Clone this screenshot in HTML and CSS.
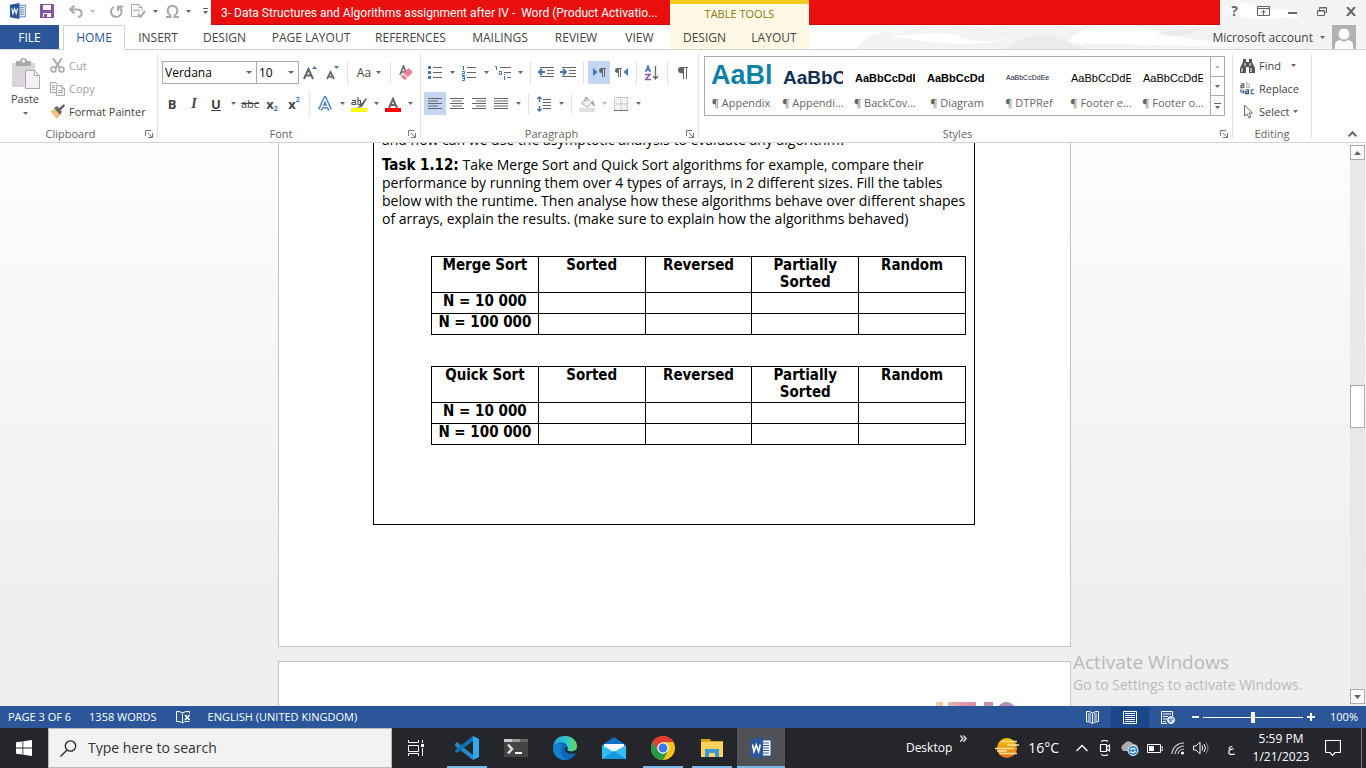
FILE: index.html
```html
<!DOCTYPE html>
<html lang="en">
<head>
    <meta charset="UTF-8">
    <meta name="viewport" content="width=device-width, initial-scale=1.0">
    <title>3- Data Structures and Algorithms assignment after IV - Word</title>
    <link rel="stylesheet" href="styles.css">
</head>
<body>
    <!-- shared icons -->
    <svg class="sprite" aria-hidden="true">
        <symbol id="caret" viewBox="0 0 5 3"><path d="M0 0h5L2.500 3z" fill="currentColor"/></symbol>
        <symbol id="launcher" viewBox="0 0 8 8"><path d="M.5 6V.5H6M3 3l3 3M7.500 3v4.500H3M7.500 7.500L5 5" fill="none" stroke="#777"/></symbol>
        <symbol id="word" viewBox="0 0 22 22"><path d="M11 3h10v16H11z" fill="#fff" stroke="#2b579a"/><path d="M13 6h6M13 8.500h6M13 11h6M13 13.500h6M13 16h6" stroke="#2b579a"/><path d="M0 2.500L13 0v22L0 19.500z" fill="#2b579a"/><path d="M2.500 7.500l1.500 7 2.300-6.500L8.600 14.500l1.700-7" fill="none" stroke="#fff" stroke-width="1.600"/></symbol>
    </svg>

    <header class="header">
        <svg class="header-art" viewBox="0 0 560 50" aria-hidden="true">
            <path d="M50 50c10-12 20-20 42-16 20-12 60-8 92-4 20-6 60-8 90 0 30-18 60-12 90-6 40 10 70 4 100-14l96-6v46z" fill="#f3f3f3"/>
            <path d="M60 32c30 12 60-4 90 4 20 10 40 6 60 2-30 10-80 10-150-6zM260 44c20-26 70-22 100-10 30 10 60 10 90 6l-20 8z" fill="#fff"/>
            <path d="M414 0h146v30c-20-8-30 4-40-4-20 10-40-10-60 0-20 8-30 0-46 4z" fill="#f4f4f4"/>
            <path d="M420 12c10-14 30-8 38 2 12-8 30-4 36 6-20-6-40 8-74-8z" fill="#fff"/>
            <path d="M200 50q20-18 50-12 20 8 30 12zM350 34q30 8 46-6" fill="#ebebeb"/>
        </svg>
        <div class="title-row">
            <div class="quick-access">
                <svg class="qa-word" width="16" height="16"><use href="#word"/></svg>
                <button class="qa-save" aria-label="Save"><svg width="14" height="14" viewBox="0 0 14 14"><path d="M0 0h14v14H0z" fill="#8a53a6"/><path d="M3 1h8v5H3zM3 9h8v4H3z" fill="#fff"/><path d="M4 10h3v3H4z" fill="#8a53a6"/></svg></button>
                <button class="qa-undo" aria-label="Undo"><svg width="14" height="13" viewBox="0 0 14 13"><path d="M5.500.5L1 4.500l4.500 4M1 4.500h7c6 0 6 7 1 7.500" fill="none" stroke="#aaa" stroke-width="2"/></svg><svg class="caret pale"><use href="#caret"/></svg></button>
                <button class="qa-redo" aria-label="Repeat"><svg width="13" height="13" viewBox="0 0 13 13"><path d="M4 1.800a5.300 5.300 0 1 0 5.500.6M8 6V1.500h5" fill="none" stroke="#aaa" stroke-width="2"/></svg></button>
                <button class="qa-doc" aria-label="Check document"><svg width="15" height="14" viewBox="0 0 15 14"><path d="M8 12.500H.5V.5H8l3 3V7M8 .5v3h3" fill="none" stroke="#aaa"/><path d="M4 5L2.500 6.500 4 8M7 5l1.500 1.500L7 8M4 6.500h3" fill="none" stroke="#aaa"/><path d="M7 10l2.500 3L14 7" fill="none" stroke="#aaa" stroke-width="2"/></svg><svg class="caret"><use href="#caret"/></svg></button>
                <button class="qa-symbol" aria-label="Symbol"><svg width="13" height="13" viewBox="0 0 13 13"><path d="M0 12h4.500v-1.500C.5 8 .5 1 6.500 1s6 7 2 9.500V12H13" fill="none" stroke="#aaa" stroke-width="2"/></svg><svg class="caret"><use href="#caret"/></svg></button>
                <button class="qa-more" aria-label="Customize"><svg width="5" height="6" viewBox="0 0 5 6"><path d="M0 0h5v1H0zM0 3h5L2.500 6z" fill="#666"/></svg></button>
            </div>
            <div class="window-title">3- Data Structures and Algorithms assignment after IV -&nbsp; Word (Product Activatio...</div>
            <div class="tools-label">TABLE TOOLS</div>
            <div class="title-fill"></div>
            <div class="window-buttons">
                <button aria-label="Help" class="help">?</button>
                <button aria-label="Ribbon display options"><svg width="13" height="10" viewBox="0 0 13 10"><path d="M.5.5h12v9H.5zM.5 2.500h12M6.500 9V4.500M4.500 6.500l2-2 2 2" fill="none" stroke="#666"/></svg></button>
                <button aria-label="Minimize"><svg width="9" height="10" viewBox="0 0 9 10"><path d="M0 6h9v2H0z" fill="#666"/></svg></button>
                <button aria-label="Restore"><svg width="10" height="9" viewBox="0 0 10 9"><path d="M.5 3.500h7v5h-7zM.5 4h7M2.500 3V.5h7v5H8M2.500 1h7" fill="none" stroke="#666"/></svg></button>
                <button aria-label="Close"><svg width="10" height="9" viewBox="0 0 10 9"><path d="M1 0l8 9M9 0L1 9" stroke="#666" stroke-width="2"/></svg></button>
            </div>
        </div>
        <nav class="tabs">
            <a href="#" class="tab file">FILE</a>
            <a href="#" class="tab home">HOME</a>
            <a href="#" class="tab insert">INSERT</a>
            <a href="#" class="tab design">DESIGN</a>
            <a href="#" class="tab page-layout">PAGE LAYOUT</a>
            <a href="#" class="tab references">REFERENCES</a>
            <a href="#" class="tab mailings">MAILINGS</a>
            <a href="#" class="tab review">REVIEW</a>
            <a href="#" class="tab view">VIEW</a>
            <a href="#" class="tab tool-tab">DESIGN</a>
            <a href="#" class="tab tool-tab">LAYOUT</a>
            <button class="account">Microsoft account <svg class="caret"><use href="#caret"/></svg>
                <svg class="avatar" width="24" height="24" viewBox="0 0 24 24"><path d="M0 0h24v24H0z" fill="#b1b1b1"/><circle cx="12" cy="9" r="5.500" fill="#fff"/><path d="M3 24v-4q0-4 5-5q4 3 8 0q5 1 5 5v4z" fill="#fff"/></svg>
            </button>
        </nav>
    </header>

    <section class="ribbon">
        <div class="group clipboard">
            <div class="group-body">
                <button class="paste">
                    <svg width="29" height="31" viewBox="0 0 29 31"><path d="M1 5h23v24H1z" fill="#d9d5da"/><path d="M5 3h4q0-3 3.500-3T16 3h4v5H5z" fill="#aaa"/><circle cx="12.500" cy="3" r="1.500" fill="#fff"/><path d="M14.500 12.500h9l5 5v13h-14zM23.500 12.500v5h5" fill="#f6f1f8" stroke="#aaa"/></svg>
                    <span>Paste</span>
                    <svg class="caret"><use href="#caret"/></svg>
                </button>
                <div class="command-list">
                    <button class="command off"><svg width="15" height="15" viewBox="0 0 15 15"><path d="M3 0l6.500 10M12 0L5.500 10" stroke="#aaa" stroke-width="2"/><circle cx="3.500" cy="11.500" r="2.500" fill="none" stroke="#aaa" stroke-width="1.500"/><circle cx="11.500" cy="11.500" r="2.500" fill="none" stroke="#aaa" stroke-width="1.500"/></svg>Cut</button>
                    <button class="command off"><svg width="15" height="14" viewBox="0 0 15 14"><path d="M6 10.500H.5V.5h5l2 2M2 3.500h3M2 5.500h3M2 7.500h3" fill="none" stroke="#aaa"/><path d="M6.500 3.500h5l3 3v7h-8zM11.500 3.500v3h3M8 8.500h5M8 10.500h5" fill="#faf7fb" stroke="#aaa"/></svg>Copy</button>
                    <button class="command"><svg width="15" height="15" viewBox="0 0 15 15"><path d="M0 7l5-2 5 6-3 4z" fill="#efc380"/><path d="M4 4l3-2 5 6-2 3z" fill="#666"/><path d="M8 5l6-5 1 2-5 5z" fill="#666"/></svg>Format Painter</button>
                </div>
            </div>
            <div class="group-name">Clipboard<button class="launcher" aria-label="Clipboard options"><svg width="8" height="8"><use href="#launcher"/></svg></button></div>
        </div>

        <div class="group font">
            <div class="group-body stacked">
                <div class="tool-row">
                    <label class="combo font-name"><select aria-label="Font"><option>Verdana</option></select></label>
                    <label class="combo font-size"><select aria-label="Font size"><option>10</option></select></label>
                    <button class="tool" aria-label="Grow font"><svg width="14" height="14" viewBox="0 0 14 14"><path d="M1 13L5.500 3 10 13M3 9.500h5" fill="none" stroke="#666" stroke-width="2"/><path d="M9 3h5l-2.500-3z" fill="#3f78b5"/></svg></button>
                    <button class="tool" aria-label="Shrink font"><svg width="14" height="14" viewBox="0 0 14 14"><path d="M2 13l3.500-7L9 13M4 11h4" fill="none" stroke="#666" stroke-width="1.700"/><path d="M9 0h5l-2.500 3z" fill="#3f78b5"/></svg></button>
                    <i class="divider"></i>
                    <button class="tool wide">Aa<svg class="caret"><use href="#caret"/></svg></button>
                    <i class="divider"></i>
                    <button class="tool" aria-label="Clear formatting"><svg width="14" height="15" viewBox="0 0 14 15"><path d="M1 10L4.500 1 8 10M2.500 7h4" fill="none" stroke="#666" stroke-width="1.600"/><path d="M9.500 3L14 7l-5 5-4.500-4z" fill="#e8818f"/><path d="M4 9l4 4-2 2-4-3z" fill="#e8818f"/></svg></button>
                </div>
                <div class="tool-row">
                    <button class="tool letter">B</button>
                    <button class="tool letter italic">I</button>
                    <button class="tool letter underline">U</button>
                    <button class="drop" aria-label="Underline styles"><svg class="caret"><use href="#caret"/></svg></button>
                    <button class="tool strike">abc</button>
                    <button class="tool letter">x<sub>2</sub></button>
                    <button class="tool letter">x<sup>2</sup></button>
                    <i class="divider"></i>
                    <button class="tool" aria-label="Text effects"><svg width="16" height="16" viewBox="0 0 16 16"><path d="M3 14L8 3l5 11M5 10.500h6" fill="none" stroke="#a9c8ea" stroke-width="5"/><path d="M3 14L8 3l5 11M5 10.500h6" fill="none" stroke="#3f78b5" stroke-width="3.400"/><path d="M3 14L8 3l5 11M5 10.500h6" fill="none" stroke="#fff" stroke-width="1.400"/></svg></button>
                    <button class="drop" aria-label="Text effects list"><svg class="caret"><use href="#caret"/></svg></button>
                    <button class="tool" aria-label="Highlight color"><svg width="16" height="16" viewBox="0 0 16 16"><path d="M1 4.500h3.500v4H1v-2h3M7 1v7.500h2.500v-4H7" fill="none" stroke="#555" stroke-width="1.200"/><path d="M15 2L9 9l-3 3 5-1 5-8z" fill="#666"/><path d="M0 12h16v4H0z" fill="#ff0"/></svg></button>
                    <button class="drop" aria-label="Highlight list"><svg class="caret"><use href="#caret"/></svg></button>
                    <button class="tool" aria-label="Font color"><svg width="16" height="16" viewBox="0 0 16 16"><path d="M4 12L8 3l4 9M5.500 9h5" fill="none" stroke="#666" stroke-width="2"/><path d="M0 12h16v4H0z" fill="#f00"/></svg></button>
                    <button class="drop" aria-label="Font color list"><svg class="caret"><use href="#caret"/></svg></button>
                </div>
            </div>
            <div class="group-name">Font<button class="launcher" aria-label="Font options"><svg width="8" height="8"><use href="#launcher"/></svg></button></div>
        </div>

        <div class="group paragraph">
            <div class="group-body stacked">
                <div class="tool-row">
                    <button class="tool" aria-label="Bullets"><svg width="14" height="15" viewBox="0 0 14 15"><path d="M5 2.500h9M5 7.500h9M5 12.500h9" stroke="#666"/><path d="M0 1h3v3H0zM0 6h3v3H0zM0 11h3v3H0z" fill="#3f78b5"/></svg></button>
                    <button class="drop" aria-label="Bullet list"><svg class="caret"><use href="#caret"/></svg></button>
                    <button class="tool" aria-label="Numbering"><svg width="14" height="16" viewBox="0 0 14 16"><path d="M5 2.500h9M5 7.500h9M5 12.500h9" stroke="#666"/><path d="M0 1.500h1.500V5M0 6.500h2.500v2H.5v2H3M0 11.500h2.500v4H0M.5 13.500h2" fill="none" stroke="#3f78b5"/></svg></button>
                    <button class="drop" aria-label="Number list"><svg class="caret"><use href="#caret"/></svg></button>
                    <button class="tool" aria-label="Multilevel list"><svg width="16" height="16" viewBox="0 0 16 16"><path d="M5 2.500h11M9 7.500h7M12 12.500h4" stroke="#666"/><path d="M0 1.500h1.500V5M4 6.500h2.500v3H4.500v-2M9.500 11v4M9.500 9v1" fill="none" stroke="#3f78b5"/></svg></button>
                    <button class="drop" aria-label="Multilevel choices"><svg class="caret"><use href="#caret"/></svg></button>
                    <i class="divider"></i>
                    <button class="tool" aria-label="Decrease indent"><svg width="16" height="11" viewBox="0 0 16 11"><path d="M2 .5h14M9 3.500h7M9 6.500h7M2 9.500h14" stroke="#666"/><path d="M7 5H1M4 2L1 5l3 3" fill="none" stroke="#3f78b5" stroke-width="2"/></svg></button>
                    <button class="tool" aria-label="Increase indent"><svg width="16" height="11" viewBox="0 0 16 11"><path d="M2 .5h14M9 3.500h7M9 6.500h7M2 9.500h14" stroke="#666"/><path d="M0 5h6M3 2l3 3-3 3" fill="none" stroke="#3f78b5" stroke-width="2"/></svg></button>
                    <i class="divider"></i>
                    <button class="tool selected" aria-label="Left to right"><svg width="13" height="9" viewBox="0 0 13 9"><path d="M0 0l4.500 4L0 8z" fill="#3f78b5"/><path d="M8 0h5v1h-1v8h-1V1h-1v8H9V5Q6 5 6 2.500T8 0z" fill="#666"/></svg></button>
                    <button class="tool" aria-label="Right to left"><svg width="13" height="9" viewBox="0 0 13 9"><path d="M13 0L8.500 4 13 8z" fill="#3f78b5"/><path d="M2 0h5v1H6v8H5V1H4v8H3V5Q0 5 0 2.500T2 0z" fill="#666"/></svg></button>
                    <i class="divider"></i>
                    <button class="tool" aria-label="Sort"><svg width="14" height="16" viewBox="0 0 14 16"><path d="M.5 7L3 1l2.500 6M1.500 5h3" fill="none" stroke="#3f78b5" stroke-width="1.500"/><path d="M0 9.500h5L.5 14.500H6" fill="none" stroke="#8a53a6" stroke-width="1.500"/><path d="M10.500 1v13M8 11l2.500 3 2.500-3" fill="none" stroke="#666" stroke-width="1.300"/></svg></button>
                    <i class="divider"></i>
                    <button class="tool" aria-label="Show marks"><svg width="10" height="12" viewBox="0 0 10 12"><path d="M3 0h7v1H9v11H8V1H6v11H5V6.500Q0 6.500 0 3.200T3 0z" fill="#666"/></svg></button>
                </div>
                <div class="tool-row">
                    <button class="tool selected" aria-label="Align left"><svg width="14" height="11" viewBox="0 0 14 11"><path d="M0 .5h14M0 3h10M0 5.500h14M0 8h10M0 10.500h14" stroke="#666"/></svg></button>
                    <button class="tool" aria-label="Center"><svg width="14" height="11" viewBox="0 0 14 11"><path d="M0 .5h14M2 3h10M0 5.500h14M2 8h10M0 10.500h14" stroke="#666"/></svg></button>
                    <button class="tool" aria-label="Align right"><svg width="14" height="11" viewBox="0 0 14 11"><path d="M0 .5h14M4 3h10M0 5.500h14M4 8h10M0 10.500h14" stroke="#666"/></svg></button>
                    <button class="tool" aria-label="Justify"><svg width="14" height="11" viewBox="0 0 14 11"><path d="M0 .5h14M0 3h14M0 5.500h14M0 8h14M0 10.500h14" stroke="#666"/></svg></button>
                    <button class="drop" aria-label="Justify list"><svg class="caret"><use href="#caret"/></svg></button>
                    <i class="divider"></i>
                    <button class="tool" aria-label="Line spacing"><svg width="14" height="16" viewBox="0 0 14 16"><path d="M6 3.500h8M6 6.500h8M6 9.500h8M6 12.500h8" stroke="#666"/><path d="M2.500 1v5M.5 3l2-2 2 2M2.500 10v5M.5 13l2 2 2-2" fill="none" stroke="#3f78b5" stroke-width="1.400"/></svg></button>
                    <button class="drop" aria-label="Spacing list"><svg class="caret"><use href="#caret"/></svg></button>
                    <i class="divider"></i>
                    <button class="tool" aria-label="Shading"><svg width="16" height="16" viewBox="0 0 16 16"><path d="M2.500 7L8 2l5 5-5 4zM6 6V1.500h2V5" fill="#f3eff4" stroke="#aaa"/><path d="M13 4q4 3 2 7l-2-3z" fill="#aaa"/><path d="M0 12h16v4H0z" fill="#e3dfe4"/></svg></button>
                    <button class="drop" aria-label="Shading list"><svg class="caret pale"><use href="#caret"/></svg></button>
                    <button class="tool" aria-label="Borders"><svg width="14" height="14" viewBox="0 0 14 14"><path d="M0 0h14v14H0z" fill="#f6f1f6"/><path d="M.5 0v13M13.500 0v13M7 0v13M0 .5h14M0 7h14" stroke="#aaa" stroke-dasharray="1 1"/><path d="M0 13.500h14" stroke="#777"/></svg></button>
                    <button class="drop" aria-label="Borders list"><svg class="caret"><use href="#caret"/></svg></button>
                </div>
            </div>
            <div class="group-name">Paragraph<button class="launcher" aria-label="Paragraph options"><svg width="8" height="8"><use href="#launcher"/></svg></button></div>
        </div>

        <div class="group styles">
            <div class="group-body">
                <div class="gallery">
                    <button class="style"><span class="preview appendix">AaBl</span><span>¶ Appendix</span></button>
                    <button class="style"><span class="preview appendix-two">AaBbC</span><span>¶ Appendi...</span></button>
                    <button class="style"><span class="preview cover">AaBbCcDdE</span><span>¶ BackCov...</span></button>
                    <button class="style"><span class="preview diagram">AaBbCcDd</span><span>¶ Diagram</span></button>
                    <button class="style"><span class="preview ref">AaBbCcDdEe</span><span>¶ DTPRef</span></button>
                    <button class="style"><span class="preview">AaBbCcDdE</span><span>¶ Footer e...</span></button>
                    <button class="style"><span class="preview">AaBbCcDdE</span><span>¶ Footer o...</span></button>
                    <div class="gallery-scroll">
                        <button aria-label="Previous styles"><svg class="caret pale up"><use href="#caret"/></svg></button>
                        <button aria-label="Next styles"><svg class="caret"><use href="#caret"/></svg></button>
                        <button aria-label="More styles"><svg width="7" height="6" viewBox="0 0 7 6"><path d="M0 0h7v1H0zM1 3h5L3.500 6z" fill="#666"/></svg></button>
                    </div>
                </div>
            </div>
            <div class="group-name">Styles<button class="launcher" aria-label="Styles options"><svg width="8" height="8"><use href="#launcher"/></svg></button></div>
        </div>

        <div class="group editing">
            <div class="group-body">
                <div class="command-list">
                    <button class="command"><svg width="15" height="14" viewBox="0 0 15 14"><path d="M3 0h3v3h3V0h3v3l3 6v5H9V8H6v6H0V9l3-6z" fill="#555"/><path d="M2 9v4M11 9v4M5 4v3M10 4v3" stroke="#fff"/></svg>Find<svg class="caret"><use href="#caret"/></svg></button>
                    <button class="command"><svg width="15" height="15" viewBox="0 0 16 15"><path d="M1 2.500h3v4H1v-2h3" fill="none" stroke="#666" stroke-width="1.300"/><path d="M7 0v6.500h3V3H7" fill="none" stroke="#bbb" stroke-width="1.300"/><path d="M6 9h3v4H6v-2h3" fill="none" stroke="#555" stroke-width="1.300"/><path d="M15 9h-3v4h3M1 8v3h3M3 9l1.500 2L3 13" fill="none" stroke="#3f78b5" stroke-width="1.300"/></svg>Replace</button>
                    <button class="command select"><svg width="15" height="15" viewBox="0 0 15 15"><path d="M4.500 1v11l2.500-2 2 4 2-1-2-4h3.500z" fill="#fff" stroke="#666"/></svg>Select<svg class="caret"><use href="#caret"/></svg></button>
                </div>
            </div>
            <div class="group-name">Editing</div>
        </div>
        <button class="collapse" aria-label="Collapse the ribbon"><svg width="9" height="6" viewBox="0 0 9 6"><path d="M.7 5.300l3.800-4 3.800 4" fill="none" stroke="#666" stroke-width="2"/></svg></button>
    </section>

    <main class="document">
        <div class="canvas">
            <article class="page current">
                <div class="frame">
                    <p>and how can we use the asymptotic analysis to evaluate any algorithm?</p>
                    <p><b>Task 1.12:</b> Take Merge Sort and Quick Sort algorithms for example, compare their performance by running them over 4 types of arrays, in 2 different sizes. Fill the tables below with the runtime. Then analyse how these algorithms behave over different shapes of arrays, explain the results. (make sure to explain how the algorithms behaved)</p>
                    <table>
                        <tr><th>Merge Sort</th><th>Sorted</th><th>Reversed</th><th>Partially Sorted</th><th>Random</th></tr>
                        <tr><th>N = 10 000</th><td></td><td></td><td></td><td></td></tr>
                        <tr><th>N = 100 000</th><td></td><td></td><td></td><td></td></tr>
                    </table>
                    <table>
                        <tr><th>Quick Sort</th><th>Sorted</th><th>Reversed</th><th>Partially Sorted</th><th>Random</th></tr>
                        <tr><th>N = 10 000</th><td></td><td></td><td></td><td></td></tr>
                        <tr><th>N = 100 000</th><td></td><td></td><td></td><td></td></tr>
                    </table>
                </div>
            </article>
            <article class="page next">
                <svg class="page-logo" width="84" height="30" viewBox="0 0 84 30" aria-hidden="true">
                    <defs><linearGradient id="logo" gradientUnits="userSpaceOnUse" x1="0" y1="0" x2="84" y2="0"><stop offset="0" stop-color="#f3cfa4"/><stop offset=".4" stop-color="#dc8fa5"/><stop offset="1" stop-color="#a98bc4"/></linearGradient></defs>
                    <path d="M0 1h7v29H0zM12 1h28v6H30v23h-8V7H12zM48 1h9v29h-9zM60 8q10-14 21 0v22H60z" fill="url(#logo)"/>
                </svg>
            </article>
        </div>
        <div class="scrollbar">
            <button aria-label="Scroll up"><svg width="7" height="4" viewBox="0 0 7 4"><path d="M0 4h7L3.500 0z" fill="#666"/></svg></button>
            <div class="track"><div class="thumb"></div></div>
            <button aria-label="Scroll down"><svg width="7" height="4" viewBox="0 0 7 4"><path d="M0 0h7L3.500 4z" fill="#666"/></svg></button>
        </div>
        <div class="watermark">
            <div class="watermark-title">Activate Windows</div>
            <div>Go to Settings to activate Windows.</div>
        </div>
    </main>

    <div class="status">
        <span>PAGE 3 OF 6</span>
        <span class="status-words">1358 WORDS</span>
        <svg class="status-proof" width="15" height="13" viewBox="0 0 15 13"><path d="M6.500 12V2Q4 0 .5.500v10q4-.5 6 1.500 2-2 4-1.500h3M6.500 2Q9 0 13.500.500v2" fill="none" stroke="#fff"/><path d="M9 4l4.500 5M13.500 4L9 9" stroke="#fff" stroke-width="1.700"/></svg>
        <span>ENGLISH (UNITED KINGDOM)</span>
        <div class="status-right">
            <button class="view-button" aria-label="Read mode"><svg width="13" height="13" viewBox="0 0 13 13"><path d="M6.500 12.500V2Q4 0 .5.500v10q4 0 6 2 2-2 6-2V.5Q9 0 6.500 2M2 3h3M2 5h3M2 7h3M2 9h3M8 3h3M8 5h3M8 7h3M8 9h3" fill="none" stroke="#fff"/></svg></button>
            <button class="view-button active" aria-label="Print layout"><svg width="14" height="13" viewBox="0 0 14 13"><path d="M.5.5h13v12H.5zM2 2.500h10M2 4.500h10M2 6.500h10M2 8.500h10M2 10.500h10" fill="none" stroke="#fff"/></svg></button>
            <button class="view-button" aria-label="Web layout"><svg width="14" height="13" viewBox="0 0 14 13"><path d="M6 12.500H.5V.5h11V5M2 3h8M2 5.500h5M2 8h4M2 10.500h3" fill="none" stroke="#fff"/><circle cx="10" cy="9" r="3.500" fill="#bdd3ef" stroke="#fff"/><path d="M8 8l2 1-1 2M11 7l1 2" fill="none" stroke="#2b579a"/></svg></button>
            <button class="zoom-button" aria-label="Zoom out"><svg width="7" height="8" viewBox="0 0 7 8"><path d="M0 3h7v2H0z" fill="#fff"/></svg></button>
            <input type="range" class="zoom" min="0" max="200" value="100" aria-label="Zoom">
            <button class="zoom-button" aria-label="Zoom in"><svg width="8" height="8" viewBox="0 0 8 8"><path d="M0 3h8v2H0zM3 0h2v8H3z" fill="#fff"/></svg></button>
            <span class="zoom-value">100%</span>
        </div>
    </div>

    <footer class="taskbar">
        <button class="start" aria-label="Start"><svg width="16" height="16" viewBox="0 0 16 16"><path d="M0 2.300L6.500 1.400v6.200H0zM7.300 1.300L16 0v7.600H7.300zM0 8.400h6.500v6.200L0 13.700zM7.300 8.400H16V16l-8.700-1.300z" fill="#fff"/></svg></button>
        <label class="search"><svg width="17" height="17" viewBox="0 0 17 17"><circle cx="10.500" cy="6" r="5.200" fill="none" stroke="#222" stroke-width="1.300"/><path d="M7 10L.5 16.500" stroke="#222" stroke-width="1.300"/></svg><input type="text" placeholder="Type here to search" aria-label="Search"></label>
        <button class="task task-view" aria-label="Task view"><svg width="17" height="16" viewBox="0 0 17 16"><path d="M.5 0v2.500h10V0M.5 5.500h10v6H.5zM.5 16v-2.500h10V16M14.500 0v3M14.500 8v8" fill="none" stroke="#fff"/><path d="M13 4h3v3h-3z" fill="#fff"/></svg></button>
        <button class="task open" aria-label="Visual Studio Code"><svg width="24" height="24" viewBox="0 0 24 24"><path d="M0 8l2-2 16 13v5L0 10z" fill="#2489ca"/><path d="M0 15l2 2L18 5V0L0 14z" fill="#0f70b3"/><path d="M18 0l6 3v18l-6 3z" fill="#32a9ef"/></svg></button>
        <button class="task" aria-label="Terminal"><svg width="24" height="18" viewBox="0 0 24 18"><path d="M0 0h24v18H0z" fill="#444"/><path d="M0 0h8v3H0z" fill="#ccc"/><path d="M8 0h8v3H8z" fill="#999"/><path d="M16 0h8v3h-8z" fill="#666"/><path d="M4 5.500l4 4.500-4 4.500" fill="none" stroke="#ddd" stroke-width="2.500"/><path d="M11 13h7v2h-7z" fill="#fff"/></svg></button>
        <button class="task" aria-label="Edge"><svg width="24" height="24" viewBox="0 0 24 24"><defs><linearGradient id="edge-top"><stop offset="0" stop-color="#1b9de2"/><stop offset=".6" stop-color="#38c9c9"/><stop offset="1" stop-color="#66dc55"/></linearGradient></defs><circle cx="12" cy="12" r="12" fill="#0b68b9"/><path d="M0 11C1 3 6 0 12 0c8 0 12 6 12 10 0 5-5 7-10 5-2-1 1-2 0-5-2-5-9-5-14 1z" fill="url(#edge-top)"/><path d="M0 12c3-6 8-5 10-3-4 4-2 13 5 15C5 25 0 19 0 12z" fill="#1580d1"/><path d="M12 12c-1 4 4 7 11 5l1-4c-3 3-8 3-10 1 1-1 1-2 0-4z" fill="#26272c"/></svg></button>
        <button class="task" aria-label="Mail"><svg width="24" height="22" viewBox="0 0 24 22"><path d="M0 8l12-8 12 8v5H0z" fill="#1272c5"/><path d="M2 7h20v7l-10 4L2 14z" fill="#fff"/><path d="M0 8l12 7 12-7v14H0z" fill="#32bdf2"/><path d="M0 22l12-8 12 8z" fill="#1596df"/></svg></button>
        <button class="task open" aria-label="Chrome"><svg width="24" height="24" viewBox="0 0 24 24"><circle cx="12" cy="12" r="12" fill="#fbc116"/><path d="M1.600 6A12 12 0 0 1 22.400 6H12L6.800 15z" fill="#e33b2e"/><path d="M1.600 6l5.200 9 5.200 3-3 5.700A12 12 0 0 1 1.600 6z" fill="#229a4a"/><path d="M12 18l-3 5.500 3 .5 5.200-9z" fill="#229a4a"/><circle cx="12" cy="12" r="5.800" fill="#fff"/><circle cx="12" cy="12" r="4.500" fill="#367be8"/></svg></button>
        <button class="task open" aria-label="File Explorer"><svg width="22" height="18" viewBox="0 0 22 18"><path d="M0 0h9l1 2h12v16H0z" fill="#e2a313"/><path d="M0 3h22v15H0z" fill="#ffd35d"/><path d="M4 10h14v8h-4v-4H8v4H4z" fill="#3f96d5"/></svg></button>
        <button class="task open current-task" aria-label="Word"><svg width="22" height="22"><use href="#word"/></svg></button>

        <div class="tray">
            <span>Desktop</span>
            <span class="chevrons">»</span>
            <svg class="weather" width="24" height="22" viewBox="0 0 24 22"><defs><linearGradient id="sun" x2="0" y2="1"><stop offset="0" stop-color="#fdc400"/><stop offset="1" stop-color="#ee6b18"/></linearGradient></defs><circle cx="12" cy="11" r="10" fill="url(#sun)"/><path d="M6 4.500h16M0 11.500h19M4 16.500h18" stroke="#ffe5a8" stroke-width="1.600"/><path d="M12 8h12M2 14h10" stroke="#ffe5a8" stroke-width="1.600"/></svg>
            <span class="temperature">16°C</span>
            <svg class="tray-up" width="12" height="8" viewBox="0 0 12 8"><path d="M.5 7L6 1.500 11.500 7" fill="none" stroke="#fff" stroke-width="1.300"/></svg>
            <svg class="tray-icon" width="16" height="16" viewBox="0 0 16 16"><path d="M3.500 4.500h6v7h-6zM9.500 7l3-2v6l-3-2M4 1.500q4-2 7 0M4 14.500q4 2 7 0" fill="none" stroke="#fff" stroke-width="1.200"/></svg>
            <svg class="tray-icon" width="18" height="16" viewBox="0 0 18 16"><path d="M2 11a4 4 0 0 1 1-7 5 5 0 0 1 9 0q5 0 5 5v2z" fill="#aaa"/><circle cx="12" cy="10.500" r="5" fill="#2384d3" stroke="#fff"/><path d="M9.500 10q2-3 5-.5M14.500 11q-2 3-5 .5" fill="none" stroke="#fff" stroke-width="1.400"/></svg>
            <svg class="tray-icon" width="16" height="16" viewBox="0 0 16 16"><path d="M.5 4.500h13v8H.5zM14 7h2v3h-2" fill="none" stroke="#fff"/><path d="M2 6h5v5H2z" fill="#fff"/></svg>
            <svg class="tray-icon" width="14" height="16" viewBox="0 0 14 16"><path d="M1 14A11.500 11.500 0 0 1 13 3M4 14a9 9 0 0 1 9-8M7 14a6 6 0 0 1 6-5" fill="none" stroke="#ccc" stroke-width="1.200"/><circle cx="11.500" cy="13" r="1.500" fill="#fff"/></svg>
            <svg class="tray-icon" width="16" height="16" viewBox="0 0 16 16"><path d="M.5 6h2.500l4-4v12l-4-4H.5zM9 5.500q1.500 2.500 0 5M11 4q3 4 0 8" fill="none" stroke="#fff"/><path d="M13 2.500q4 5.500 0 11" fill="none" stroke="#888"/></svg>
            <span class="language">ع</span>
            <span class="clock">5:59 PM<br>1/21/2023</span>
            <svg class="notes" width="16" height="16" viewBox="0 0 16 16"><path d="M.5.5h15v12H10L7.500 15.300 5 12.500H.5z" fill="none" stroke="#fff" stroke-width="1.200"/></svg>
        </div>
    </footer>
</body>
</html>
```

FILE: styles.css
```css
* {
    box-sizing: border-box;
}
body {
    margin: 0;
    height: 100vh;
    display: flex;
    flex-direction: column;
    overflow: hidden;
    background: #fff;
    color: #444;
    font-family: "Open Sans", "Noto Sans", sans-serif;
    font-size: 12px;
    line-height: 16px;
}
button {
    display: flex;
    align-items: center;
    justify-content: center;
    padding: 0;
    border: 0;
    background: none;
    color: inherit;
    font: inherit;
    white-space: nowrap;
}
a {
    color: inherit;
    text-decoration: none;
}
svg {
    flex: none;
    display: block;
}
.sprite {
    position: absolute;
    width: 0;
    height: 0;
}
.caret {
    width: 5px;
    height: 3px;
    color: #666;
}
.pale {
    color: #bbb;
}
.up {
    transform: rotate(180deg);
}

/* title bar and tabs */
.header {
    position: relative;
    flex: none;
    border-bottom: 1px solid #d4d4d4;
}
.header-art {
    position: absolute;
    right: 0;
    bottom: 0;
    width: 560px;
    height: 50px;
}
.title-row {
    position: relative;
    display: flex;
    height: 25px;
}
.quick-access {
    display: flex;
    align-items: center;
    flex: none;
    width: 211px;
    padding: 0 3px 3px 10px;
}
.quick-access button {
    gap: 7px;
    height: 16px;
}
.qa-save {
    margin-left: 14px;
}
.qa-undo,
.qa-redo {
    margin-left: 15px;
}
.qa-doc,
.qa-symbol {
    margin-left: 8px;
}
.qa-more {
    margin-left: auto;
}
.window-title {
    flex: none;
    width: 459px;
    padding-left: 10px;
    overflow: hidden;
    background: #ea0f0f;
    border-bottom: 1px solid #c90c0c;
    color: #fff;
    font-family: Roboto, "Open Sans", sans-serif;
    line-height: 26px;
    white-space: nowrap;
}
.tools-label {
    flex: none;
    width: 139px;
    border-top: 4px solid #f5cc1b;
    background: #fff9e5;
    color: #947510;
    font-size: 11px;
    line-height: 19px;
    text-align: center;
}
.title-fill {
    flex: 1;
    background: #ea0f0f;
    border-bottom: 1px solid #c90c0c;
}
.window-buttons {
    display: flex;
    flex: none;
    width: 146px;
    height: 22px;
}
.window-buttons button {
    width: 29px;
}
.window-buttons .help {
    font-size: 14px;
    font-weight: 700;
    color: #666;
}
.tabs {
    position: relative;
    display: flex;
    height: 24px;
    line-height: 25px;
}
.tab {
    flex: none;
    text-align: center;
}
.file {
    width: 59px;
    margin-right: 4px;
    background: #2b579a;
    color: #fff;
}
.home {
    width: 62px;
    height: 25px;
    border: 1px solid #d4d4d4;
    border-bottom: 0;
    background: #fff;
    color: #2b579a;
    line-height: 23px;
}
.insert {
    width: 66px;
}
.design {
    width: 67px;
}
.page-layout {
    width: 106px;
}
.references {
    width: 93px;
}
.mailings {
    width: 86px;
}
.review {
    width: 66px;
}
.view {
    width: 61px;
}
.tool-tab {
    width: 69px;
    height: 24px;
    background: #fff9e5;
}
.tool-tab + .tool-tab {
    width: 70px;
}
.account {
    gap: 7px;
    margin-left: auto;
    margin-right: 10px;
}

/* ribbon */
.ribbon {
    display: flex;
    flex: none;
    height: 93px;
    padding: 4px 0;
    border-bottom: 1px solid #d4d4d4;
}
.group {
    display: flex;
    flex-direction: column;
    flex: none;
    border-right: 1px solid #e1e1e1;
}
.group-body {
    display: flex;
    flex: none;
    height: 72px;
}
.stacked {
    flex-direction: column;
    gap: 8px;
    padding: 7px 3px 0;
}
.group-name {
    position: relative;
    height: 12px;
    color: #666;
    font-size: 11px;
    line-height: 16px;
    text-align: center;
}
.launcher {
    position: absolute;
    right: 4px;
    bottom: 0;
}
.clipboard {
    width: 158px;
}
.font {
    width: 263px;
}
.paragraph {
    width: 278px;
}
.styles {
    flex: 1;
    min-width: 530px;
}
.editing {
    width: 79px;
}
.clipboard .group-name,
.font .group-name,
.paragraph .group-name,
.styles .group-name {
    padding-right: 16px;
}
.paste {
    flex-direction: column;
    justify-content: flex-start;
    width: 50px;
    padding-top: 4px;
    font-size: 11px;
}
.paste span {
    margin: 2px 0 5px;
}
.command-list {
    display: flex;
    flex-direction: column;
    height: 69px;
}
.command {
    justify-content: flex-start;
    gap: 4px;
    height: 23px;
    font-size: 11px;
}
.off {
    color: #a0a0a0;
}
.tool-row {
    display: flex;
    align-items: center;
    height: 23px;
}
.tool {
    flex: none;
    width: 22px;
    height: 23px;
}
.wide {
    width: 34px;
    gap: 5px;
}
.drop {
    flex: none;
    width: 12px;
    height: 23px;
}
.selected {
    background: #c2d5f2;
}
.divider {
    flex: none;
    width: 1px;
    height: 22px;
    margin: 0 4px;
    background: #e1e1e1;
}
.combo {
    position: relative;
    height: 23px;
    border: 1px solid #ababab;
}
.combo::after {
    content: "";
    position: absolute;
    right: 4px;
    top: 9px;
    border: 3px solid transparent;
    border-top-color: #666;
    border-bottom: 0;
}
.combo select {
    appearance: none;
    width: 100%;
    height: 21px;
    padding: 0 2px;
    border: 0;
    background: none;
    color: #000;
    font: inherit;
}
.font-name {
    width: 95px;
    margin-left: 1px;
}
.font-size {
    width: 43px;
    margin-left: -1px;
}
.letter {
    font-size: 13px;
    font-weight: 700;
}
.italic {
    font-family: "Liberation Serif", serif;
    font-style: italic;
    font-size: 14px;
}
.underline {
    text-decoration: underline;
}
.strike {
    font-size: 11px;
    text-decoration: line-through;
}
.letter sub,
.letter sup {
    color: #3f78b5;
    font-size: 7px;
    line-height: 7px;
}
.letter sub {
    align-self: flex-end;
    margin-bottom: 3px;
}
.letter sup {
    align-self: flex-start;
    margin-top: 4px;
}
.gallery {
    display: flex;
    flex: 1;
    height: 60px;
    margin: 2px 7px 0 5px;
    border: 1px solid #ababab;
}
.style {
    flex: none;
    flex-direction: column;
    justify-content: flex-start;
    width: 72px;
    color: #666;
    font-size: 11px;
    line-height: 20px;
}
.preview {
    width: 60px;
    height: 36px;
    overflow: hidden;
    color: #000;
    font-family: "Liberation Sans", Arial, sans-serif;
    line-height: 42px;
    text-align: left;
}
.appendix {
    color: #0e82a6;
    font-size: 27px;
    font-weight: 700;
    line-height: 36px;
}
.appendix-two {
    color: #0f2f55;
    font-size: 19px;
    font-weight: 700;
}
.cover,
.diagram {
    font-weight: 700;
}
.ref {
    width: 46px;
    color: #123;
    font-size: 7px;
}
.gallery-scroll {
    display: flex;
    flex-direction: column;
    width: 14px;
    margin-left: auto;
    border-left: 1px solid #ababab;
}
.gallery-scroll button {
    flex: 1;
}
.gallery-scroll button + button {
    border-top: 1px solid #ababab;
}
.editing .command-list {
    padding-left: 7px;
}
.command .caret {
    margin-left: 6px;
}
.select .caret {
    margin-left: 0;
}
.collapse {
    align-self: flex-end;
    width: 54px;
    height: 9px;
    padding-left: 26px;
}

/* document */
.document {
    position: relative;
    display: flex;
    flex: 1;
    min-height: 0;
    overflow: hidden;
    background: linear-gradient(#fdfdfd, #efefef 80%);
}
.canvas {
    display: flex;
    flex-direction: column;
    align-items: center;
    flex: 1;
    gap: 14px;
}
.page {
    flex: none;
    width: 793px;
    border: 1px solid #c6c6c6;
    background: #fff;
}
.current {
    margin-top: -14px;
    padding: 0 95px 121px 94px;
}
.next {
    height: 300px;
    padding: 39px 50px;
}
.page-logo {
    margin-left: auto;
}
.frame {
    padding: 1px 8px 79px;
    border: 1px solid #000;
    border-top: 0;
    color: #000;
    font-size: 14px;
    line-height: 18px;
}
.frame b,
.frame th {
    font-family: "DejaVu Sans Condensed", "DejaVu Sans", sans-serif;
    font-size: 15px;
    line-height: 17px;
}
.frame p {
    margin: 0 0 7px;
}
.frame table {
    width: 535px;
    margin: 28px 0 0 49px;
    border-collapse: collapse;
    table-layout: fixed;
}
.frame table + table {
    margin-top: 31px;
}
.frame th,
.frame td {
    height: 21px;
    padding: 0;
    border: 1px solid #000;
    vertical-align: top;
}
.frame tr:first-child th {
    height: 36px;
}
.scrollbar {
    display: flex;
    flex-direction: column;
    flex: none;
    width: 17px;
    padding: 2px 1px;
}
.scrollbar button {
    height: 15px;
    border: 1px solid #ababab;
    background: #fff;
}
.track {
    flex: 1;
    padding-top: 225px;
    background: #e8e8e8;
}
.thumb {
    height: 43px;
    border: 1px solid #ababab;
    background: #fff;
}
.watermark {
    position: absolute;
    right: 56px;
    bottom: 12px;
    width: 237px;
    color: #b9b9b9;
    font-size: 14px;
    line-height: 18px;
    white-space: nowrap;
}
.watermark-title {
    font-size: 19px;
    line-height: 28px;
}

/* status bar */
.status {
    display: flex;
    align-items: center;
    flex: none;
    height: 22px;
    padding-left: 8px;
    background: #2b579a;
    color: #fff;
    font-size: 11px;
}
.status-words {
    margin-left: 18px;
}
.status-proof {
    margin: 0 17px 0 19px;
}
.status-right {
    display: flex;
    align-items: center;
    margin-left: auto;
}
.view-button {
    width: 38px;
    height: 21px;
}
.active {
    background: #19478a;
}
.zoom-button {
    width: 16px;
    height: 22px;
}
.zoom {
    appearance: none;
    width: 100px;
    height: 12px;
    margin: 0;
    background: linear-gradient(#fff, #fff) center / 100% 1px no-repeat;
}
.zoom::-webkit-slider-thumb {
    appearance: none;
    width: 4px;
    height: 11px;
    background: #fff;
}
.zoom-value {
    width: 47px;
    padding-right: 8px;
    text-align: right;
}

/* taskbar */
.taskbar {
    display: flex;
    flex: none;
    height: 40px;
    background: #25262b;
    color: #fff;
}
.start {
    width: 48px;
}
.search {
    display: flex;
    align-items: center;
    gap: 11px;
    width: 344px;
    padding: 0 11px;
    border: 1px solid #bbb;
    background: #f2f2f2;
}
.search input {
    flex: 1;
    min-width: 0;
    padding: 0;
    border: 0;
    background: none;
    color: #333;
    font: inherit;
    font-size: 14px;
}
.search input::placeholder {
    color: #333;
}
.task {
    position: relative;
    width: 48px;
    margin-right: 1px;
}
.task-view {
    margin-right: 3px;
}
.open::after {
    content: "";
    position: absolute;
    left: 4px;
    right: 4px;
    bottom: 0;
    height: 2px;
    background: #76b9ed;
}
.current-task {
    background: #505155;
}
.current-task::after {
    left: 0;
    right: 0;
}
.tray {
    display: flex;
    align-items: center;
    margin-left: auto;
    margin-right: 4px;
    border-right: 1px solid #777;
}
.chevrons {
    align-self: flex-start;
    margin-left: 7px;
    font-size: 16px;
    line-height: 18px;
}
.weather {
    margin-left: 28px;
}
.temperature {
    margin-left: 9px;
    font-size: 14px;
}
.tray-up {
    margin: 0 9px 0 17px;
}
.tray-icon {
    margin-right: 8px;
}
.language {
    width: 28px;
    text-align: center;
    font-family: "DejaVu Sans", sans-serif;
}
.clock {
    width: 72px;
    line-height: 18px;
    text-align: center;
}
.notes {
    margin: 0 20px 0 8px;
}
```
